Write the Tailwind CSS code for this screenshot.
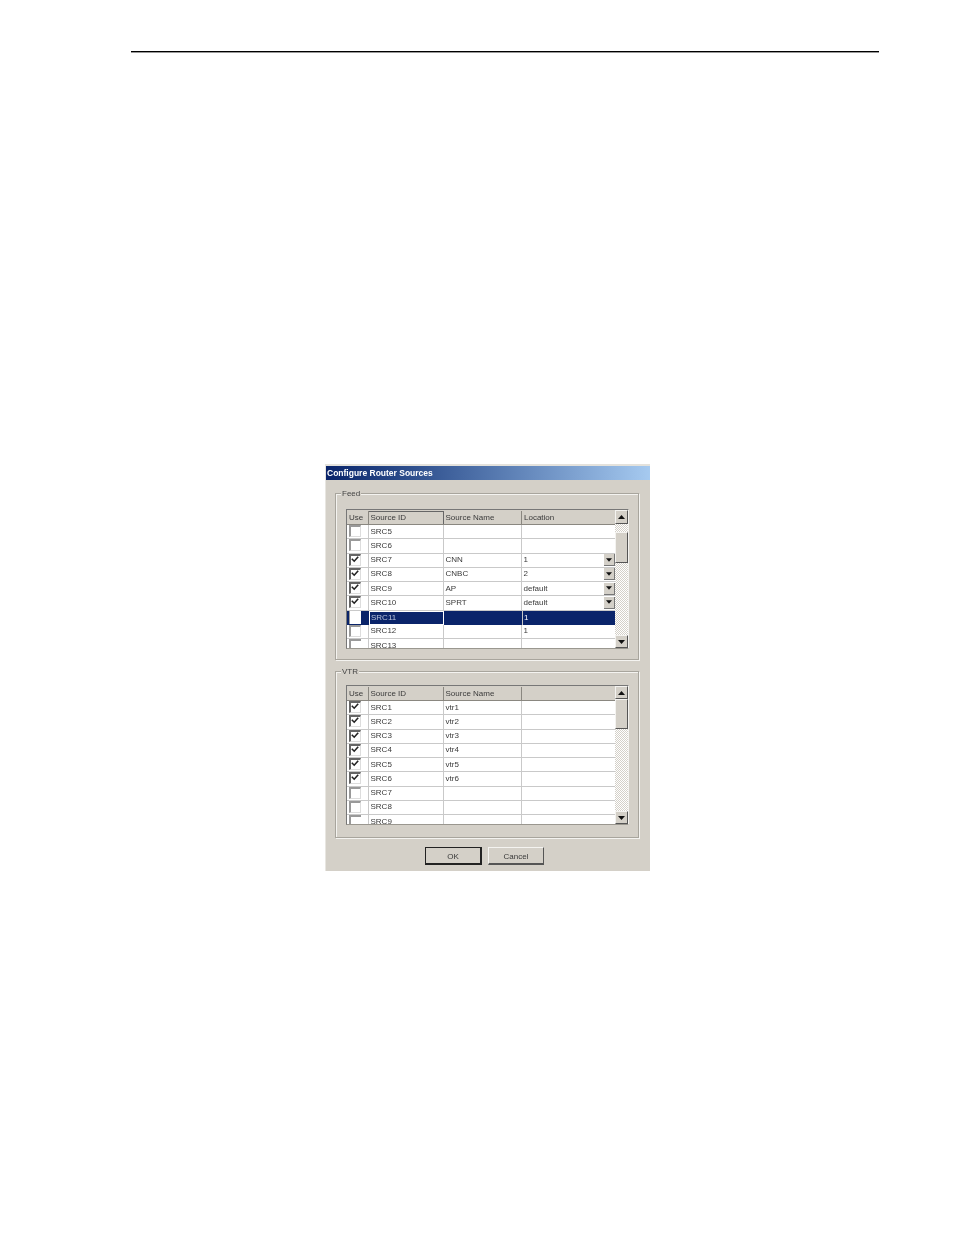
<!doctype html>
<html><head><meta charset="utf-8"><script src="https://cdn.jsdelivr.net/npm/@tailwindcss/browser@4"></script></head>
<body class="bg-white">
<div class="relative w-[954px] h-[1235px] overflow-hidden bg-white pt-[51px] font-['Liberation_Sans',sans-serif]">
<div class="ml-[131px] w-[748px] h-[2px] bg-[linear-gradient(#000_50%,#999_50%)]"></div>
<div class="ml-[325px] mt-[411px] w-[325px] h-[407px] bg-[#d4d0c8] border-l border-t-2 border-l-[#e8e6e1] border-t-[#e4e2dc] text-[8px] leading-none text-[#3a3a3a] blur-[0.3px]">
<div class="h-[14px] flex items-center pl-[1px] bg-gradient-to-r from-[#0a246a] to-[#a6caf0] text-white font-bold text-[8.5px]">Configure Router Sources</div>

<div class="relative ml-[9px] mt-[13px] w-[304px] h-[167px] border border-[#a8a59d] shadow-[inset_1px_1px_0_#f4f3f0,1px_1px_0_#f4f3f0] pl-[10px] pt-[15px]">
<span class="absolute left-[5px] top-[-4px] bg-[#d4d0c8] px-[1px] text-[#444]">Feed</span>
<div class="flex w-[283px] h-[140px] border-l border-t border-l-[#777] border-t-[#777] border-r border-b border-r-[#f4f3f0] border-b-[#9a978f]">
<div class="w-[269px] overflow-hidden bg-white">
<div class="grid grid-cols-[22px_75px_78px_94px] h-[15px] pt-[1px] bg-[#d4d0c8] border-b border-[#8a8780]">
<div class="flex items-center pl-[2px] border-r border-[#8a8780]">Use</div>
<div class="flex items-center pl-[1.5px] border-r border-t border-[#666]">Source ID</div>
<div class="flex items-center pl-[1.5px] border-r border-[#8a8780]">Source Name</div>
<div class="flex items-center pl-[2px]">Location</div>
</div>
<div class="grid grid-cols-[22px_75px_78px_94px] h-[14.25px] border-b border-[#c9c9c9]">
<div class="flex items-start pl-[1.5px] border-r border-[#c9c9c9]"><span class="w-[12px] h-[12px] border-l-2 border-t-2 border-l-[#999] border-t-[#999] border-r border-b border-r-[#ddd] border-b-[#ddd] bg-white"></span></div>
<div class="flex items-center pl-[1.5px] border-r border-[#c9c9c9]">SRC5</div>
<div class="border-r border-[#c9c9c9]"></div><div></div></div>
<div class="grid grid-cols-[22px_75px_78px_94px] h-[14.25px] border-b border-[#c9c9c9]">
<div class="flex items-start pl-[1.5px] border-r border-[#c9c9c9]"><span class="w-[12px] h-[12px] border-l-2 border-t-2 border-l-[#999] border-t-[#999] border-r border-b border-r-[#ddd] border-b-[#ddd] bg-white"></span></div>
<div class="flex items-center pl-[1.5px] border-r border-[#c9c9c9]">SRC6</div>
<div class="border-r border-[#c9c9c9]"></div><div></div></div>
<div class="grid grid-cols-[22px_75px_78px_94px] h-[14.25px] border-b border-[#c9c9c9]">
<div class="flex items-start pl-[1.5px] border-r border-[#c9c9c9]"><span class="w-[12px] h-[12px] border-l-2 border-t-2 border-l-[#666] border-t-[#666] border-r border-b border-r-[#ddd] border-b-[#ddd] bg-white"><svg viewBox="0 0 10 10" class="w-[8px] h-[8px]"><path d="M1 3.5L4 6.5L9 1" fill="none" stroke="#222" stroke-width="2"/></svg></span></div>
<div class="flex items-center pl-[1.5px] border-r border-[#c9c9c9]">SRC7</div>
<div class="flex items-center pl-[1.5px] border-r border-[#c9c9c9]">CNN</div>
<div class="flex items-center justify-between pl-[1.5px] pr-[1px]"><span>1</span><span class="flex items-center justify-center w-[11px] h-[12px] bg-[#d4d0c8] border-r border-b border-[#777]"><svg viewBox="0 0 7 4" class="w-[6px] h-[4px]"><path d="M0 0H7L3.5 4Z" fill="#111"/></svg></span></div></div>
<div class="grid grid-cols-[22px_75px_78px_94px] h-[14.25px] border-b border-[#c9c9c9]">
<div class="flex items-start pl-[1.5px] border-r border-[#c9c9c9]"><span class="w-[12px] h-[12px] border-l-2 border-t-2 border-l-[#666] border-t-[#666] border-r border-b border-r-[#ddd] border-b-[#ddd] bg-white"><svg viewBox="0 0 10 10" class="w-[8px] h-[8px]"><path d="M1 3.5L4 6.5L9 1" fill="none" stroke="#222" stroke-width="2"/></svg></span></div>
<div class="flex items-center pl-[1.5px] border-r border-[#c9c9c9]">SRC8</div>
<div class="flex items-center pl-[1.5px] border-r border-[#c9c9c9]">CNBC</div>
<div class="flex items-center justify-between pl-[1.5px] pr-[1px]"><span>2</span><span class="flex items-center justify-center w-[11px] h-[12px] bg-[#d4d0c8] border-r border-b border-[#777]"><svg viewBox="0 0 7 4" class="w-[6px] h-[4px]"><path d="M0 0H7L3.5 4Z" fill="#111"/></svg></span></div></div>
<div class="grid grid-cols-[22px_75px_78px_94px] h-[14.25px] border-b border-[#c9c9c9]">
<div class="flex items-start pl-[1.5px] border-r border-[#c9c9c9]"><span class="w-[12px] h-[12px] border-l-2 border-t-2 border-l-[#666] border-t-[#666] border-r border-b border-r-[#ddd] border-b-[#ddd] bg-white"><svg viewBox="0 0 10 10" class="w-[8px] h-[8px]"><path d="M1 3.5L4 6.5L9 1" fill="none" stroke="#222" stroke-width="2"/></svg></span></div>
<div class="flex items-center pl-[1.5px] border-r border-[#c9c9c9]">SRC9</div>
<div class="flex items-center pl-[1.5px] border-r border-[#c9c9c9]">AP</div>
<div class="flex items-center justify-between pl-[1.5px] pr-[1px]"><span>default</span><span class="flex items-center justify-center w-[11px] h-[12px] bg-[#d4d0c8] border-r border-b border-[#777]"><svg viewBox="0 0 7 4" class="w-[6px] h-[4px]"><path d="M0 0H7L3.5 4Z" fill="#111"/></svg></span></div></div>
<div class="grid grid-cols-[22px_75px_78px_94px] h-[14.25px] border-b border-[#c9c9c9]">
<div class="flex items-start pl-[1.5px] border-r border-[#c9c9c9]"><span class="w-[12px] h-[12px] border-l-2 border-t-2 border-l-[#666] border-t-[#666] border-r border-b border-r-[#ddd] border-b-[#ddd] bg-white"><svg viewBox="0 0 10 10" class="w-[8px] h-[8px]"><path d="M1 3.5L4 6.5L9 1" fill="none" stroke="#222" stroke-width="2"/></svg></span></div>
<div class="flex items-center pl-[1.5px] border-r border-[#c9c9c9]">SRC10</div>
<div class="flex items-center pl-[1.5px] border-r border-[#c9c9c9]">SPRT</div>
<div class="flex items-center justify-between pl-[1.5px] pr-[1px]"><span>default</span><span class="flex items-center justify-center w-[11px] h-[12px] bg-[#d4d0c8] border-r border-b border-[#777]"><svg viewBox="0 0 7 4" class="w-[6px] h-[4px]"><path d="M0 0H7L3.5 4Z" fill="#111"/></svg></span></div></div>
<div class="grid grid-cols-[22px_75px_78px_94px] h-[14.25px] bg-[#0a246a] text-white">
<div class="flex items-start pl-[1.5px]"><span class="w-[12px] h-[13px] bg-white border-l border-[#999]"></span></div>
<div class="flex items-center pl-[1px] border border-white text-[#b9c2da]">SRC11</div>
<div></div>
<div class="flex items-center pl-[1px] border-l border-[#c9c9c9]">1</div></div>
<div class="grid grid-cols-[22px_75px_78px_94px] h-[14.25px] border-b border-[#c9c9c9]">
<div class="flex items-start pl-[1.5px] border-r border-[#c9c9c9]"><span class="w-[12px] h-[12px] border-l-2 border-t-2 border-l-[#999] border-t-[#999] border-r border-b border-r-[#ddd] border-b-[#ddd] bg-white"></span></div>
<div class="flex items-center pl-[1.5px] border-r border-[#c9c9c9]">SRC12</div>
<div class="border-r border-[#c9c9c9]"></div>
<div class="flex items-center pl-[1.5px]">1</div></div>
<div class="grid grid-cols-[22px_75px_78px_94px] h-[14.25px]">
<div class="flex items-start pl-[1.5px] border-r border-[#c9c9c9]"><span class="w-[12px] h-[12px] border-l-2 border-t-2 border-l-[#999] border-t-[#999] bg-white"></span></div>
<div class="flex items-center pl-[1.5px] border-r border-[#c9c9c9]">SRC13</div>
<div class="border-r border-[#c9c9c9]"></div><div></div></div>
</div>
<div class="w-[13px] flex flex-col bg-[repeating-conic-gradient(#d4d0c8_0_25%,#fff_0_50%)] bg-[length:2px_2px]">
<div class="h-[14px] flex items-center justify-center bg-[#d4d0c8] border border-t-[#f4f3f0] border-l-[#f4f3f0] border-r-[#555] border-b-[#555]"><svg viewBox="0 0 7 4" class="w-[7px] h-[4px]"><path d="M0 4H7L3.5 0Z" fill="#111"/></svg></div>
<div class="h-[8px]"></div>
<div class="h-[31px] bg-[#d4d0c8] border border-t-[#f4f3f0] border-l-[#f4f3f0] border-r-[#555] border-b-[#555]"></div>
<div class="flex-1"></div>
<div class="h-[13px] flex items-center justify-center bg-[#d4d0c8] border border-t-[#f4f3f0] border-l-[#f4f3f0] border-r-[#555] border-b-[#555]"><svg viewBox="0 0 7 4" class="w-[7px] h-[4px]"><path d="M0 0H7L3.5 4Z" fill="#111"/></svg></div>
</div>
</div>
</div>

<div class="relative ml-[9px] mt-[11px] w-[304px] h-[167px] border border-[#a8a59d] shadow-[inset_1px_1px_0_#f4f3f0,1px_1px_0_#f4f3f0] pl-[10px] pt-[13px]">
<span class="absolute left-[5px] top-[-4px] bg-[#d4d0c8] px-[1px] text-[#444]">VTR</span>
<div class="flex w-[283px] h-[140px] border-l border-t border-l-[#777] border-t-[#777] border-r border-b border-r-[#f4f3f0] border-b-[#9a978f]">
<div class="w-[269px] overflow-hidden bg-white">
<div class="grid grid-cols-[22px_75px_78px_94px] h-[15px] pt-[1px] bg-[#d4d0c8] border-b border-[#8a8780]">
<div class="flex items-center pl-[2px] border-r border-[#8a8780]">Use</div>
<div class="flex items-center pl-[1.5px] border-r border-[#8a8780]">Source ID</div>
<div class="flex items-center pl-[1.5px] border-r border-[#8a8780]">Source Name</div>
<div></div>
</div>
<div class="grid grid-cols-[22px_75px_78px_94px] h-[14.25px] border-b border-[#c9c9c9]">
<div class="flex items-start pl-[1.5px] border-r border-[#c9c9c9]"><span class="w-[12px] h-[12px] border-l-2 border-t-2 border-l-[#666] border-t-[#666] border-r border-b border-r-[#ddd] border-b-[#ddd] bg-white"><svg viewBox="0 0 10 10" class="w-[8px] h-[8px]"><path d="M1 3.5L4 6.5L9 1" fill="none" stroke="#222" stroke-width="2"/></svg></span></div>
<div class="flex items-center pl-[1.5px] border-r border-[#c9c9c9]">SRC1</div>
<div class="flex items-center pl-[1.5px] border-r border-[#c9c9c9]">vtr1</div><div></div></div>
<div class="grid grid-cols-[22px_75px_78px_94px] h-[14.25px] border-b border-[#c9c9c9]">
<div class="flex items-start pl-[1.5px] border-r border-[#c9c9c9]"><span class="w-[12px] h-[12px] border-l-2 border-t-2 border-l-[#666] border-t-[#666] border-r border-b border-r-[#ddd] border-b-[#ddd] bg-white"><svg viewBox="0 0 10 10" class="w-[8px] h-[8px]"><path d="M1 3.5L4 6.5L9 1" fill="none" stroke="#222" stroke-width="2"/></svg></span></div>
<div class="flex items-center pl-[1.5px] border-r border-[#c9c9c9]">SRC2</div>
<div class="flex items-center pl-[1.5px] border-r border-[#c9c9c9]">vtr2</div><div></div></div>
<div class="grid grid-cols-[22px_75px_78px_94px] h-[14.25px] border-b border-[#c9c9c9]">
<div class="flex items-start pl-[1.5px] border-r border-[#c9c9c9]"><span class="w-[12px] h-[12px] border-l-2 border-t-2 border-l-[#666] border-t-[#666] border-r border-b border-r-[#ddd] border-b-[#ddd] bg-white"><svg viewBox="0 0 10 10" class="w-[8px] h-[8px]"><path d="M1 3.5L4 6.5L9 1" fill="none" stroke="#222" stroke-width="2"/></svg></span></div>
<div class="flex items-center pl-[1.5px] border-r border-[#c9c9c9]">SRC3</div>
<div class="flex items-center pl-[1.5px] border-r border-[#c9c9c9]">vtr3</div><div></div></div>
<div class="grid grid-cols-[22px_75px_78px_94px] h-[14.25px] border-b border-[#c9c9c9]">
<div class="flex items-start pl-[1.5px] border-r border-[#c9c9c9]"><span class="w-[12px] h-[12px] border-l-2 border-t-2 border-l-[#666] border-t-[#666] border-r border-b border-r-[#ddd] border-b-[#ddd] bg-white"><svg viewBox="0 0 10 10" class="w-[8px] h-[8px]"><path d="M1 3.5L4 6.5L9 1" fill="none" stroke="#222" stroke-width="2"/></svg></span></div>
<div class="flex items-center pl-[1.5px] border-r border-[#c9c9c9]">SRC4</div>
<div class="flex items-center pl-[1.5px] border-r border-[#c9c9c9]">vtr4</div><div></div></div>
<div class="grid grid-cols-[22px_75px_78px_94px] h-[14.25px] border-b border-[#c9c9c9]">
<div class="flex items-start pl-[1.5px] border-r border-[#c9c9c9]"><span class="w-[12px] h-[12px] border-l-2 border-t-2 border-l-[#666] border-t-[#666] border-r border-b border-r-[#ddd] border-b-[#ddd] bg-white"><svg viewBox="0 0 10 10" class="w-[8px] h-[8px]"><path d="M1 3.5L4 6.5L9 1" fill="none" stroke="#222" stroke-width="2"/></svg></span></div>
<div class="flex items-center pl-[1.5px] border-r border-[#c9c9c9]">SRC5</div>
<div class="flex items-center pl-[1.5px] border-r border-[#c9c9c9]">vtr5</div><div></div></div>
<div class="grid grid-cols-[22px_75px_78px_94px] h-[14.25px] border-b border-[#c9c9c9]">
<div class="flex items-start pl-[1.5px] border-r border-[#c9c9c9]"><span class="w-[12px] h-[12px] border-l-2 border-t-2 border-l-[#666] border-t-[#666] border-r border-b border-r-[#ddd] border-b-[#ddd] bg-white"><svg viewBox="0 0 10 10" class="w-[8px] h-[8px]"><path d="M1 3.5L4 6.5L9 1" fill="none" stroke="#222" stroke-width="2"/></svg></span></div>
<div class="flex items-center pl-[1.5px] border-r border-[#c9c9c9]">SRC6</div>
<div class="flex items-center pl-[1.5px] border-r border-[#c9c9c9]">vtr6</div><div></div></div>
<div class="grid grid-cols-[22px_75px_78px_94px] h-[14.25px] border-b border-[#c9c9c9]">
<div class="flex items-start pl-[1.5px] border-r border-[#c9c9c9]"><span class="w-[12px] h-[12px] border-l-2 border-t-2 border-l-[#999] border-t-[#999] border-r border-b border-r-[#ddd] border-b-[#ddd] bg-white"></span></div>
<div class="flex items-center pl-[1.5px] border-r border-[#c9c9c9]">SRC7</div>
<div class="border-r border-[#c9c9c9]"></div><div></div></div>
<div class="grid grid-cols-[22px_75px_78px_94px] h-[14.25px] border-b border-[#c9c9c9]">
<div class="flex items-start pl-[1.5px] border-r border-[#c9c9c9]"><span class="w-[12px] h-[12px] border-l-2 border-t-2 border-l-[#999] border-t-[#999] border-r border-b border-r-[#ddd] border-b-[#ddd] bg-white"></span></div>
<div class="flex items-center pl-[1.5px] border-r border-[#c9c9c9]">SRC8</div>
<div class="border-r border-[#c9c9c9]"></div><div></div></div>
<div class="grid grid-cols-[22px_75px_78px_94px] h-[14.25px]">
<div class="flex items-start pl-[1.5px] border-r border-[#c9c9c9]"><span class="w-[12px] h-[12px] border-l-2 border-t-2 border-l-[#999] border-t-[#999] bg-white"></span></div>
<div class="flex items-center pl-[1.5px] border-r border-[#c9c9c9]">SRC9</div>
<div class="border-r border-[#c9c9c9]"></div><div></div></div>
</div>
<div class="w-[13px] flex flex-col bg-[repeating-conic-gradient(#d4d0c8_0_25%,#fff_0_50%)] bg-[length:2px_2px]">
<div class="h-[13px] flex items-center justify-center bg-[#d4d0c8] border border-t-[#f4f3f0] border-l-[#f4f3f0] border-r-[#555] border-b-[#555]"><svg viewBox="0 0 7 4" class="w-[7px] h-[4px]"><path d="M0 4H7L3.5 0Z" fill="#111"/></svg></div>
<div class="h-[30px] bg-[#d4d0c8] border border-t-[#f4f3f0] border-l-[#f4f3f0] border-r-[#555] border-b-[#555]"></div>
<div class="flex-1"></div>
<div class="h-[13px] flex items-center justify-center bg-[#d4d0c8] border border-t-[#f4f3f0] border-l-[#f4f3f0] border-r-[#555] border-b-[#555]"><svg viewBox="0 0 7 4" class="w-[7px] h-[4px]"><path d="M0 0H7L3.5 4Z" fill="#111"/></svg></div>
</div>
</div>
</div>

<div class="flex gap-[6px] ml-[99px] mt-[9px]">
<div class="w-[57px] h-[18px] pt-[2px] flex items-center justify-center border border-[#222] border-b-2 border-r-2">OK</div>
<div class="w-[56px] h-[18px] pt-[2px] flex items-center justify-center border border-t-[#f4f3f0] border-l-[#f4f3f0] border-r-[#555] border-b-[#555] border-b-2">Cancel</div>
</div>
</div>
</div>
</body></html>
